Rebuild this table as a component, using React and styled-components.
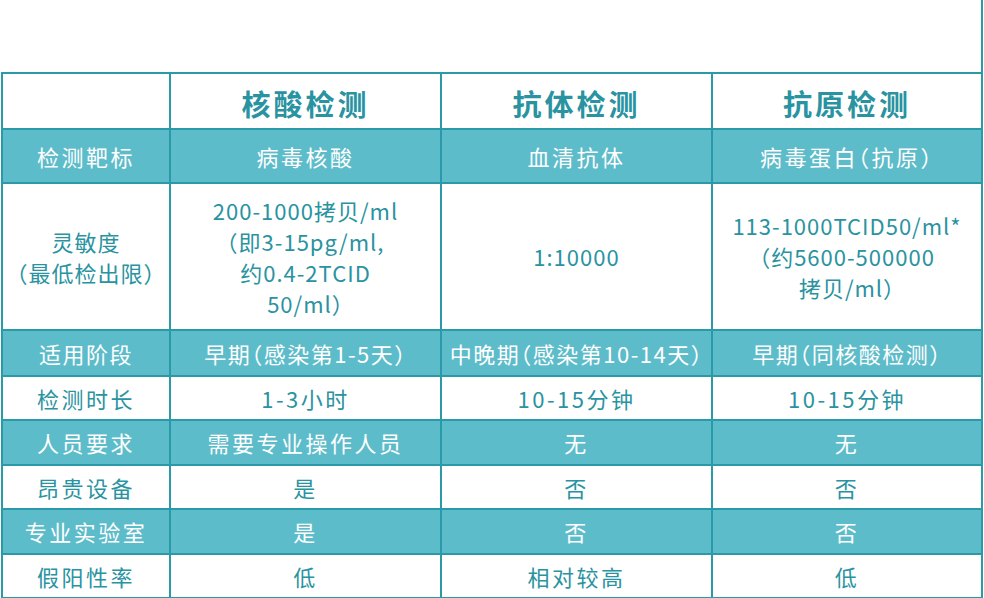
import React from 'react';
import styled, { createGlobalStyle } from 'styled-components';

const rows = [
	{
		label: '检测靶标',
		tone: 'teal',
		height: 52,
		cells: ['病毒核酸', '血清抗体', '病毒蛋白（抗原）'],
	},
	{
		label: ['灵敏度', '（最低检出限）'],
		tone: 'white',
		height: 145,
		spacing: 1,
		cells: [
			['200-1000拷贝/ml', '（即3-15pg/ml,', '约0.4-2TCID', '50/ml）'],
			'1:10000',
			['113-1000TCID50/ml*', '（约5600-500000', '拷贝/ml）'],
		],
	},
	{
		label: '适用阶段',
		tone: 'teal',
		height: 44,
		spacing: 1.5,
		cells: ['早期（感染第1-5天）', '中晚期（感染第10-14天）', '早期（同核酸检测）'],
	},
	{ label: '检测时长', tone: 'white', height: 42, cells: ['1-3小时', '10-15分钟', '10-15分钟'] },
	{ label: '人员要求', tone: 'teal', height: 43, cells: ['需要专业操作人员', '无', '无'] },
	{ label: '昂贵设备', tone: 'white', height: 42, cells: ['是', '否', '否'] },
	{ label: '专业实验室', tone: 'teal', height: 43, cells: ['是', '否', '否'] },
	{ label: '假阳性率', tone: 'white', height: 42, cells: ['低', '相对较高', '低'] },
];

const heads = ['核酸检测', '抗体检测', '抗原检测'];

const Lines = ({ text }) =>
	Array.isArray(text) ? text.map((t, i) => <Line key={i}>{t}</Line>) : text;

const App = () => {
	return (
		<>
			<Global />
			<Page>
				<EdgeLine />
				<Table>
					<HeadCell />
					{heads.map((h) => (
						<HeadCell key={h}>{h}</HeadCell>
					))}
					{rows.map((row, r) => (
						<React.Fragment key={r}>
							<Cell $tone={row.tone} $h={row.height} $sp={row.spacing}>
								<Lines text={row.label} />
							</Cell>
							{row.cells.map((c, i) => (
								<Cell key={i} $tone={row.tone} $h={row.height} $sp={row.spacing}>
									<Lines text={c} />
								</Cell>
							))}
						</React.Fragment>
					))}
				</Table>
			</Page>
		</>
	);
};

export default App;

const Global = createGlobalStyle`
	html, body {
		margin: 0;
		padding: 0;
		background: #fff;
		overflow: hidden;
	}
	body {
		font-family: "Noto Sans CJK SC", "Noto Sans", sans-serif;
	}
`;

const Page = styled.div`
	position: relative;
	width: 984px;
	height: 598px;
	padding: 72px 0 0 1px;
	box-sizing: border-box;
	overflow: hidden;
`;

const EdgeLine = styled.div`
	position: absolute;
	left: 981px;
	top: 0;
	width: 2px;
	height: 525px;
	background: #2b9aa8;
	z-index: 2;
`;

const Table = styled.div`
	display: grid;
	grid-template-columns: 166px 269px 269px 268px;
	gap: 2px;
	padding: 2px;
	width: max-content;
	background: #2b9aa8;
`;

const HeadCell = styled.div`
	display: flex;
	align-items: center;
	justify-content: center;
	height: 54px;
	background: #fff;
	color: #2a93a1;
	font-size: 29px;
	font-weight: 700;
	letter-spacing: 3px;
	padding-top: 3px;
	box-sizing: border-box;
`;

const Cell = styled.div`
	display: flex;
	flex-direction: column;
	align-items: center;
	justify-content: center;
	height: ${(p) => p.$h}px;
	background: ${(p) => (p.$tone === 'teal' ? '#5dbcca' : '#fff')};
	color: ${(p) => (p.$tone === 'teal' ? '#fff' : '#2a93a1')};
	font-size: 22px;
	font-weight: 400;
	font-feature-settings: "halt";
	letter-spacing: ${(p) => (p.$sp ?? 2.5)}px;
	line-height: 31px;
	text-align: center;
	white-space: nowrap;
`;

const Line = styled.div`
	line-height: 31px;
`;
